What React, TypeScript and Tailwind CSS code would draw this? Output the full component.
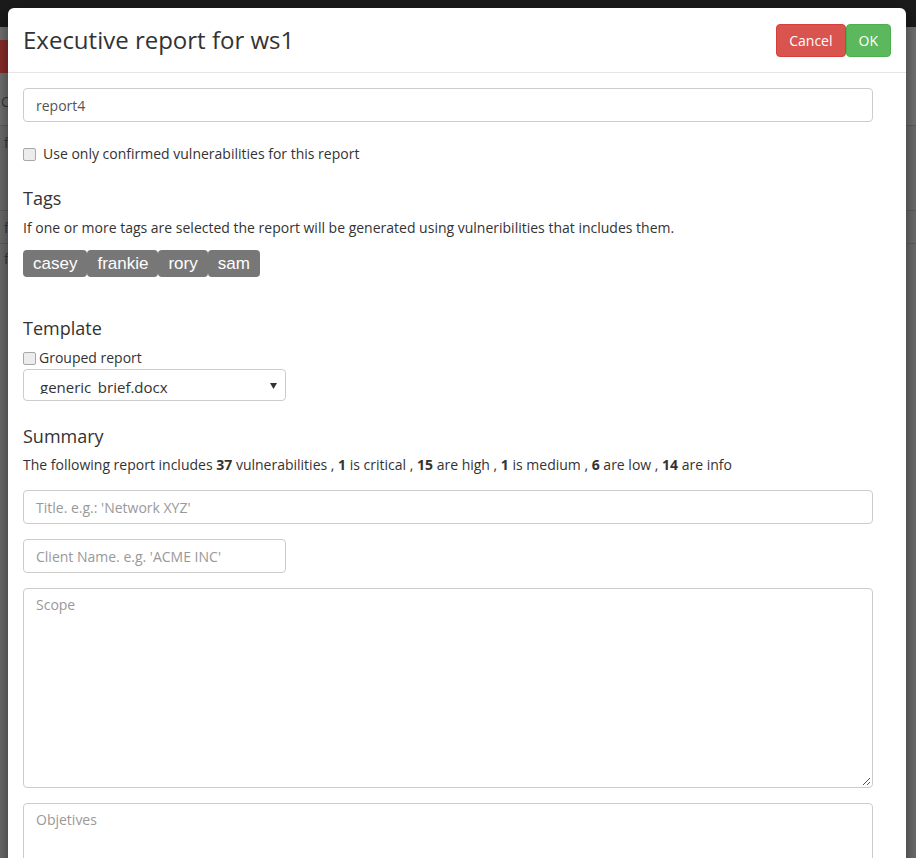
import React from "react";

const font = { fontFamily: '"Open Sans", "Noto Sans", sans-serif' };

function Checkbox() {
  return (
    <span className="inline-block w-[13px] h-[13px] rounded-[2px] border border-[#a8a8a8] bg-[#ececec] shrink-0" />
  );
}

function Chip({ label }: { label: string }) {
  return (
    <span
      className="inline-flex items-center h-[27px] px-[10px] bg-[#777777] text-white text-[17px] rounded-[4px]"
      style={{ fontFamily: '"Liberation Sans", Arial, sans-serif' }}
    >
      {label}
    </span>
  );
}

export default function App() {
  return (
    <div className="relative w-[916px] h-[858px] overflow-hidden bg-[#6c6c6c]" style={font}>
      {/* underlying (dimmed) page */}
      <div className="flex flex-col">
        <div className="h-[27px] bg-[#1b1b1b]" />
        <div className="h-[98px] bg-[#717171] flex flex-col">
          <div className="mt-[13px] h-[33px] w-[60px] bg-[#8a2d2b]" />
          <div className="mt-[18px] text-[#3a3a3a] text-[14px] pl-[1px]">C</div>
        </div>
        <div className="h-[85px] border-t border-[#5e5e5e] text-[#3a3a3a] text-[14px] pl-[4px] pt-[6px]">f</div>
        <div className="h-[33px] border-t border-[#5e5e5e] text-[#3a3a3a] text-[14px] pl-[4px] pt-[6px]">f</div>
        <div className="h-[33px] border-t border-[#5e5e5e] text-[#3a3a3a] text-[14px] pl-[4px] pt-[4px]">f</div>
      </div>

      {/* modal */}
      <div className="absolute left-[8px] top-[8px] w-[898px] h-[900px] bg-white rounded-[6px] shadow-[0_5px_15px_rgba(0,0,0,0.5)] text-[#333333]">
        <div className="flex items-center justify-between px-[15px] h-[65px] border-b border-[#e5e5e5]">
          <h1 className="text-[24px] leading-[28px] text-[#333333] font-normal">Executive report for ws1</h1>
          <div className="flex">
            <button className="h-[33px] px-[12px] text-[14px] text-white bg-[#d9534f] border border-[#d43f3a] rounded-[4px]">
              Cancel
            </button>
            <button className="h-[33px] px-[12px] text-[14px] text-white bg-[#5cb85c] border border-[#4cae4c] rounded-[4px]">
              OK
            </button>
          </div>
        </div>

        <div className="px-[15px] pt-[15px] flex flex-col items-start text-[14px]">
          <div className="w-[850px] h-[34px] border border-[#cccccc] rounded-[4px] px-[12px] flex items-center text-[#555555]">
            report4
          </div>

          <label className="mt-[22px] h-[20px] flex items-center gap-[7px] leading-[20px]">
            <Checkbox />
            <span>Use only confirmed vulnerabilities for this report</span>
          </label>

          <h4 className="mt-[24px] text-[18px] leading-[20px] font-normal">Tags</h4>
          <p className="mt-[10px] leading-[20px]">
            If one or more tags are selected the report will be generated using vulneribilities that includes them.
          </p>
          <div className="mt-[12px] flex">
            <Chip label="casey" />
            <Chip label="frankie" />
            <Chip label="rory" />
            <Chip label="sam" />
          </div>

          <h4 className="mt-[41px] text-[18px] leading-[20px] font-normal">Template</h4>
          <label className="mt-[10px] h-[20px] flex items-center gap-[3px] leading-[20px]">
            <Checkbox />
            <span>Grouped report</span>
          </label>
          <div className="mt-[1px] w-[263px] h-[32px] border border-[#cccccc] rounded-[4px] relative">
            <div className="h-[24px] overflow-hidden pl-[16px] pt-[7px] leading-[20px] text-[15px] text-[#333333]">
              generic_brief.docx
            </div>
            <svg className="absolute right-[8px] top-[12px]" width="7" height="7" viewBox="0 0 7 7">
              <polygon points="0,1 7,1 3.5,7" fill="#333" />
            </svg>
          </div>

          <h4 className="mt-[25px] text-[18px] leading-[20px] font-normal">Summary</h4>
          <p className="mt-[9px] leading-[20px]">
            The following report includes <b>37</b> vulnerabilities , <b>1</b> is critical , <b>15</b> are high ,{" "}
            <b>1</b> is medium , <b>6</b> are low , <b>14</b> are info
          </p>

          <div className="mt-[15px] w-[850px] h-[34px] border border-[#cccccc] rounded-[4px] px-[12px] flex items-center text-[#999999]">
            Title. e.g.: 'Network XYZ'
          </div>
          <div className="mt-[15px] w-[263px] h-[34px] border border-[#cccccc] rounded-[4px] px-[12px] flex items-center text-[#999999]">
            Client Name. e.g. 'ACME INC'
          </div>
          <div className="mt-[15px] w-[850px] h-[200px] border border-[#cccccc] rounded-[4px] px-[12px] pt-[6px] leading-[20px] text-[#999999] relative">
            Scope
            <svg className="absolute right-[1px] bottom-[1px]" width="9" height="9" viewBox="0 0 9 9">
              <line x1="1" y1="8" x2="8" y2="1" stroke="#555" strokeWidth="1" />
              <line x1="5" y1="8" x2="8" y2="5" stroke="#555" strokeWidth="1" />
            </svg>
          </div>
          <div className="mt-[15px] w-[850px] h-[200px] border border-[#cccccc] rounded-[4px] px-[12px] pt-[6px] leading-[20px] text-[#999999]">
            Objetives
          </div>
        </div>
      </div>
    </div>
  );
}
